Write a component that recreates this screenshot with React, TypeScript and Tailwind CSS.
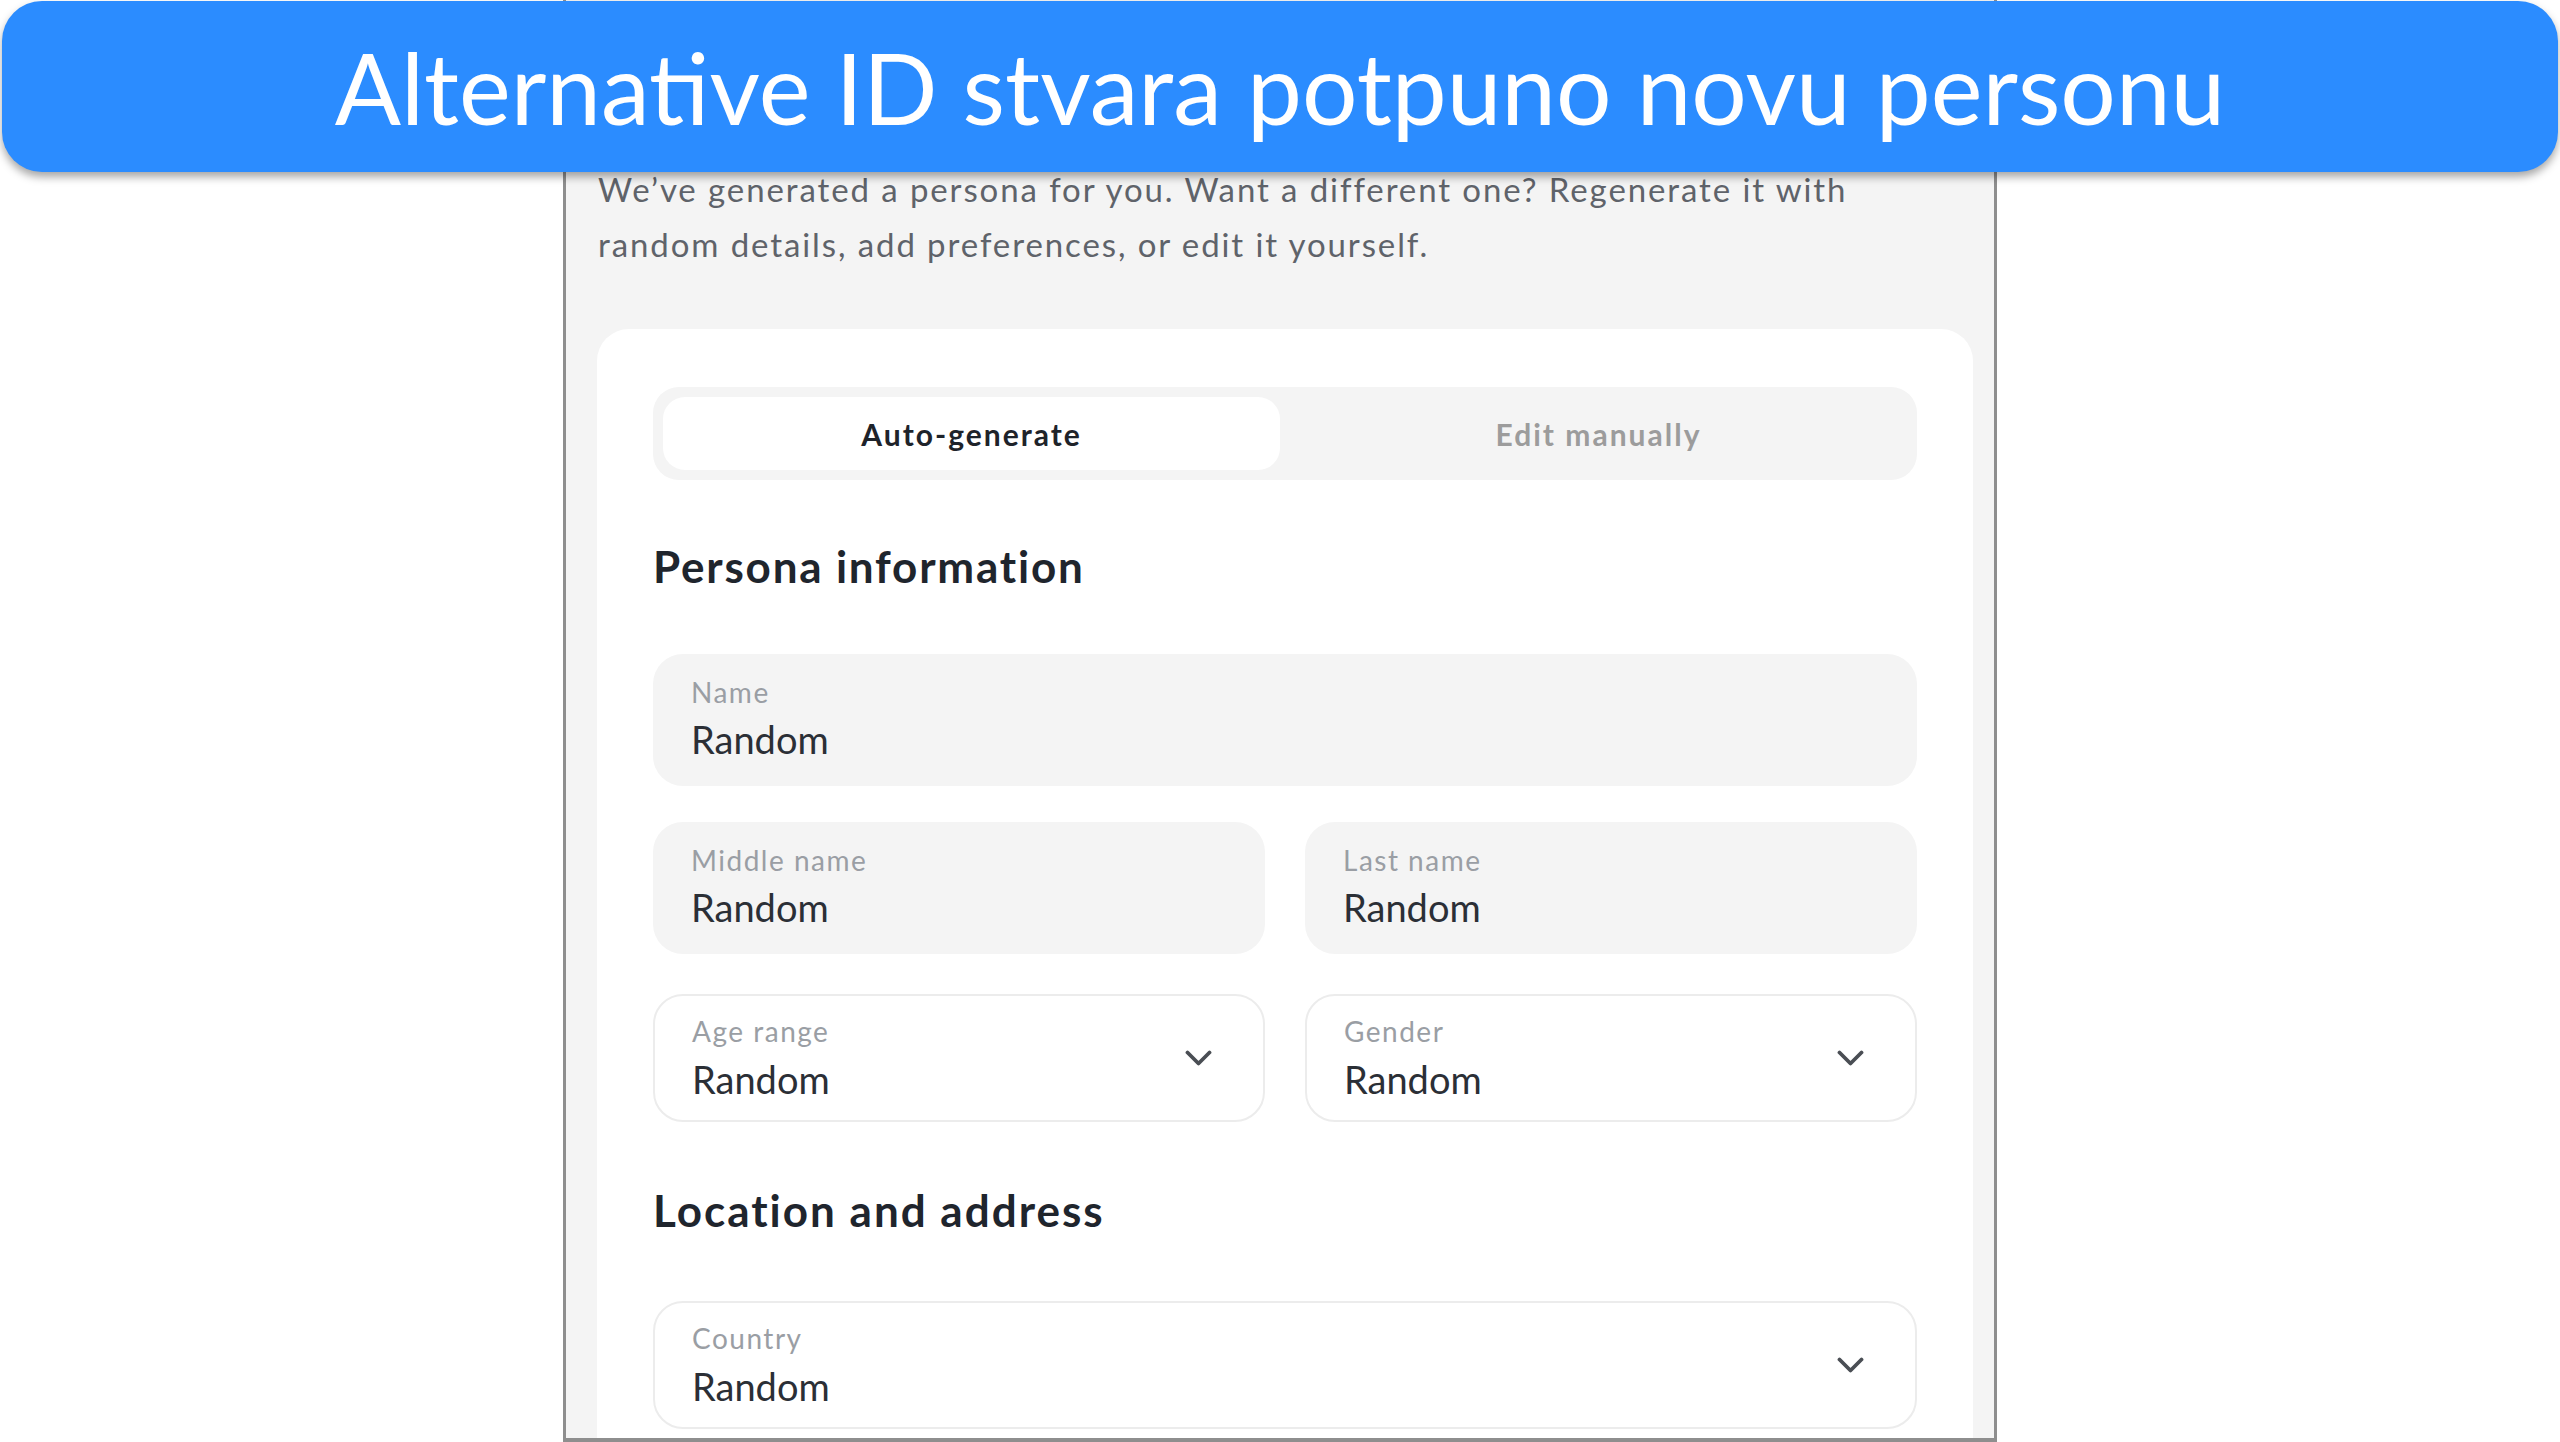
const font = "font-['Lato','Noto_Sans',sans-serif]"

function Chevron() {
  return (
    <svg width="27" height="17" viewBox="0 0 27 17" fill="none" className="shrink-0">
      <polyline points="2.5,2.5 13.5,13.5 24.5,2.5" stroke="#4a4e54" strokeWidth="3.8" strokeLinecap="round" strokeLinejoin="round" />
    </svg>
  )
}

function TextField({ label, value }: { label: string; value: string }) {
  return (
    <div className="flex h-[132px] flex-col rounded-[30px] bg-[#f4f4f4] px-[38px] pt-[21px]">
      <span className="text-[28px] leading-[34px] tracking-[1.5px] text-[#9a9ea4]">{label}</span>
      <span className="mt-[7px] text-[38px] leading-[46px] text-[#2b2f36]">{value}</span>
    </div>
  )
}

function SelectField({ label, value }: { label: string; value: string }) {
  return (
    <div className="flex h-[128px] items-center justify-between rounded-[30px] border-2 border-[#ececec] bg-white pl-[37px] pr-[51px]">
      <div className="flex flex-col pb-[1px]">
        <span className="text-[28px] leading-[34px] tracking-[1.5px] text-[#9a9ea4]">{label}</span>
        <span className="mt-[8px] text-[38px] leading-[46px] text-[#2b2f36]">{value}</span>
      </div>
      <Chevron />
    </div>
  )
}

export default function App() {
  return (
    <div className={`relative h-[1442px] w-full overflow-hidden bg-white ${font}`}>
      {/* screenshot panel */}
      <div className="ml-[563px] flex h-[1442px] w-[1434px] flex-col border-x-[3px] border-b-[4px] border-[#8e8e8e] bg-[#f4f4f4] pl-[31px] pr-[21px] pt-[162px]">
        <p className="whitespace-nowrap pl-[1px] text-[33px] leading-[55px] tracking-[1.9px] text-[#5f636a]">
          We’ve generated a persona for you. Want a different one? Regenerate it with
          <br />
          random details, add preferences, or edit it yourself.
        </p>

        <div className="mt-[57px] flex-1 rounded-t-[32px] bg-white px-[56px] pt-[58px]">
          <div className="grid h-[93px] grid-cols-2 gap-[10px] rounded-[26px] bg-[#f4f4f4] p-[10px]">
            <div className="flex items-center justify-center rounded-[22px] bg-white pt-[2px] text-[30px] font-bold tracking-[2px] text-[#1e232a]">
              Auto-generate
            </div>
            <div className="flex items-center justify-center pt-[2px] text-[30px] font-bold tracking-[2px] text-[#9c9c9c]">
              Edit manually
            </div>
          </div>

          <h2 className="mt-[60px] text-[44px] font-bold leading-[52px] tracking-[1.8px] text-[#1f252d]">Persona information</h2>

          <div className="mt-[62px]">
            <TextField label="Name" value="Random" />
          </div>
          <div className="mt-[36px] grid grid-cols-2 gap-[40px]">
            <TextField label="Middle name" value="Random" />
            <TextField label="Last name" value="Random" />
          </div>
          <div className="mt-[40px] grid grid-cols-2 gap-[40px]">
            <SelectField label="Age range" value="Random" />
            <SelectField label="Gender" value="Random" />
          </div>

          <h2 className="mt-[62px] text-[44px] font-bold leading-[52px] tracking-[2px] text-[#1f252d]">Location and address</h2>

          <div className="mt-[65px]">
            <SelectField label="Country" value="Random" />
          </div>
        </div>
      </div>

      {/* caption banner */}
      <div className="absolute left-[2px] right-[2px] top-[1px] flex h-[171px] items-center justify-center rounded-[40px] bg-[#2b8cff] shadow-[0_5px_8px_rgba(0,0,0,0.35)]">
        <span className="text-[98px] leading-none text-white">Alternative ID stvara potpuno novu personu</span>
      </div>
    </div>
  )
}
